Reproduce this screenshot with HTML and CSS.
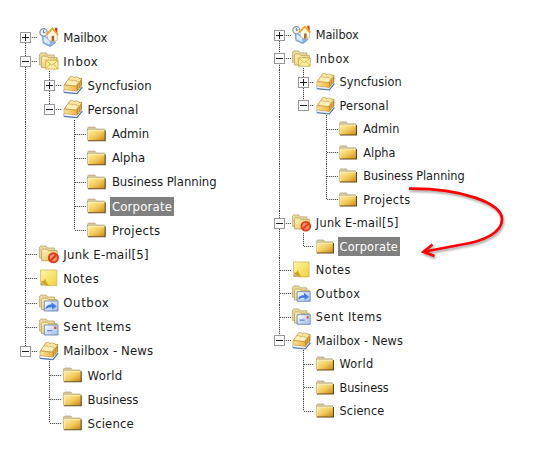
FILE: index.html
```
<!DOCTYPE html>
<html lang="en">
<head>
<meta charset="utf-8">
<title>Mail folders</title>
<link rel="stylesheet" href="styles.css">
</head>
<body>
<svg class="defs" aria-hidden="true">
  <defs>
    <linearGradient id="gold" x1="0" y1="0" x2="1" y2="1"><stop offset="0" stop-color="#fff0a8"/><stop offset=".5" stop-color="#f2cb5c"/><stop offset="1" stop-color="#c98412"/></linearGradient>
    <linearGradient id="pale" x1="0" y1="0" x2="1" y2="1"><stop offset="0" stop-color="#fff3bd"/><stop offset="1" stop-color="#e3bd5c"/></linearGradient>
    <linearGradient id="note" x1="0" y1="0" x2="1" y2="1"><stop offset="0" stop-color="#fff7a8"/><stop offset="1" stop-color="#efd03a"/></linearGradient>
    <linearGradient id="blue" x1="0" y1="0" x2="1" y2="1"><stop offset="0" stop-color="#fff"/><stop offset="1" stop-color="#9fbce8"/></linearGradient>
    <linearGradient id="wood" x1="0" y1="0" x2="1" y2="0"><stop offset="0" stop-color="#f9e3a0"/><stop offset="1" stop-color="#eeb53c"/></linearGradient>
    <symbol id="folder" viewBox="0 0 20 20">
      <path d="M.5 16V4.2L1.7 3h6.1l1.7 2h7.8v3H1z" fill="#d3c69b" stroke="#b5a57b" stroke-width=".7"/>
      <path d="M1 6.4h17v10.2H1z" fill="url(#gold)"/>
      <path d="M1.2 16V6.6H17.4" fill="none" stroke="#fff2b4" stroke-width=".8"/>
      <path d="M.8 16.7h17.4V6.2" fill="none" stroke="#66491c" stroke-width="1.1"/>
    </symbol>
    <symbol id="back" viewBox="0 0 20 20">
      <path d="M.6 14V3.1L1.8 2h5.3l1.5 2h6.8v10z" fill="#eadba0" stroke="#b5a571" stroke-width=".8"/>
      <path d="M2.6 16.7V6.1l1-1h4.2l1.3 1.5h9v10.1z" fill="url(#pale)" stroke="#ba9d54" stroke-width=".8"/>
    </symbol>
    <symbol id="inbox" viewBox="0 0 20 20">
      <use href="#back"/>
      <path d="M6.8 9.2h12.2v8.8h-12.2z" fill="#fff2a4" stroke="#c9a03a" stroke-width=".8"/>
      <path d="M7 9.6l5.9 4.7 5.9-4.7M7 17.6l4.1-4.6m7.7 4.6l-4.1-4.6" fill="none" stroke="#d3a62e" stroke-width=".8"/>
    </symbol>
    <symbol id="junk" viewBox="0 0 20 20">
      <use href="#back"/>
      <circle cx="14.4" cy="13.8" r="4.6" fill="#f69272" stroke="#dd3c16" stroke-width="1.9"/>
      <path d="M11.4 16.8l6-6" stroke="#dd3c16" stroke-width="2"/>
    </symbol>
    <symbol id="outbox" viewBox="0 0 20 20">
      <use href="#back"/>
      <path d="M5.3 8h13.7v10H5.3z" fill="url(#blue)" stroke="#6784bb" stroke-width=".9"/>
      <path d="M6.5 16.6c0-3.4 2.2-5 6-5V9.2l5.2 4-4.6 3.4v-2.2c-2.8-.2-4.8.4-6.6 2.2z" fill="#417be0"/>
    </symbol>
    <symbol id="sent" viewBox="0 0 20 20">
      <use href="#back"/>
      <path d="M5.3 8h13.7v10H5.3z" fill="url(#blue)" stroke="#6784bb" stroke-width=".9"/>
      <path d="M15.2 9.6h2.2V12h-2.2z" fill="#e0482c"/><path d="M8 13.7h5.3" stroke="#5b7fc2" stroke-width="1.1"/>
    </symbol>
    <symbol id="notes" viewBox="0 0 20 20">
      <path d="M1.6 2h16.2v15.6H6.3l-4.7-4.2z" fill="url(#note)" stroke="#cdb04b" stroke-width=".7"/>
      <path d="M1.6 13.2c2.2.4 4-.4 4.4-2.8.8 2.8 1.9 5.6 4.6 7.1H6.3z" fill="#d0a61f"/>
      <path d="M1.4 14v3.6H6z" fill="#b3a878"/>
    </symbol>
    <symbol id="stack" viewBox="0 0 20 20">
      <path d="M.6 15.2L4.6 11l14.6 1.2-5 6.2-13.3-1.2z" fill="#eef4fd" stroke="#7d98be" stroke-width=".7"/>
      <path d="M.9 17.4l13 1.3 5.2-6.3" fill="none" stroke="#5477a8" stroke-width="1.1"/>
      <path d="M1 9.8L6.6 2l12.4 1v7.2l-5 5.9-13-1.7z" fill="#d6a03a"/>
      <path d="M5.4 4.2l1.7-2.7 3.4.3.6 1.1 1.3-.9 3.1.3.6 1.1 2.7.2-3.3 4.7-11.4-1.2z" fill="#fae5a4" stroke="#b9974c" stroke-width=".6"/>
      <path d="M3.2 7.2l1.8-2.4 3.2.3.8 1.2 1.5-.9 3.2.4.7 1.2 1.5.1-3 3.9-11-1.2z" fill="#ffeeb8" stroke="#c09a47" stroke-width=".6"/>
      <path d="M1 10l12.8 1.3.2 4.8-13-1.6z" fill="url(#wood)" stroke="#c9973a" stroke-width=".6"/>
      <path d="M14 11.3l5-7v6l-4.8 5.7z" fill="#b98a33"/>
      <path d="M15.6 9.5v4.4m1.6-6.6v4.7" stroke="#e8c473" stroke-width=".7"/>
    </symbol>
    <symbol id="home" viewBox="0 0 20 20">
      <path d="M3.5 9l11 3.3 2 3.2-5.3 4L4 16z" fill="#85b5ef" stroke="#5583bd" stroke-width=".7"/>
      <path d="M4.6 9.2l6 4.1.2 4.4-6.2-2.8z" fill="#d9eafc"/>
      <circle cx="4.6" cy="5.4" r="3.7" fill="#eff4fa" stroke="#8495ad" stroke-width="1.2"/>
      <path d="M4.5 3.2v2.6l2-.8" fill="none" stroke="#54647c" stroke-width=".9"/>
      <path d="M16 .8h2.4v5H16z" fill="#d93a22"/>
      <path d="M8.6 7.2l4.9-5 4.8 5v6l-4.9 1.6-4.6-2.4z" fill="#fff8e6" stroke="#b3a27e" stroke-width=".6"/>
      <path d="M7.4 7.7l6-6.1 5.8 6.4" fill="none" stroke="#f4a51f" stroke-width="1.8"/>
      <path d="M12.6 8.8h2.6v5l-2.6.8z" fill="#a86824"/>
    </symbol>
  </defs>
</svg>
<main class="board">
  <div class="tree before">
    <div class="row"><i class="g top"><b class="plus"></b></i><svg class="icon"><use href="#home"/></svg><span class="t-mailbox">Mailbox</span></div>
    <div class="row"><i class="g tee"><b></b></i><svg class="icon"><use href="#inbox"/></svg><span class="t-inbox">Inbox</span></div>
    <div class="row"><i class="g bar"></i><i class="g tee first"><b class="plus"></b></i><svg class="icon"><use href="#stack"/></svg><span class="t-sync">Syncfusion</span></div>
    <div class="row"><i class="g bar"></i><i class="g end"><b></b></i><svg class="icon"><use href="#stack"/></svg><span class="t-personal">Personal</span></div>
    <div class="row"><i class="g bar"></i><i class="g"></i><i class="g tee first"></i><svg class="icon"><use href="#folder"/></svg><span class="t-admin">Admin</span></div>
    <div class="row"><i class="g bar"></i><i class="g"></i><i class="g tee"></i><svg class="icon"><use href="#folder"/></svg><span class="t-alpha">Alpha</span></div>
    <div class="row"><i class="g bar"></i><i class="g"></i><i class="g tee"></i><svg class="icon"><use href="#folder"/></svg><span class="t-planning">Business Planning</span></div>
    <div class="row"><i class="g bar"></i><i class="g"></i><i class="g tee"></i><svg class="icon"><use href="#folder"/></svg><span class="t-corporate selected">Corporate</span></div>
    <div class="row"><i class="g bar"></i><i class="g"></i><i class="g end"></i><svg class="icon"><use href="#folder"/></svg><span class="t-projects">Projects</span></div>
    <div class="row"><i class="g tee"></i><svg class="icon"><use href="#junk"/></svg><span class="t-junk">Junk E-mail[5]</span></div>
    <div class="row"><i class="g tee"></i><svg class="icon"><use href="#notes"/></svg><span class="t-notes">Notes</span></div>
    <div class="row"><i class="g tee"></i><svg class="icon"><use href="#outbox"/></svg><span class="t-outbox">Outbox</span></div>
    <div class="row"><i class="g tee"></i><svg class="icon"><use href="#sent"/></svg><span class="t-sent">Sent Items</span></div>
    <div class="row"><i class="g end"><b></b></i><svg class="icon"><use href="#stack"/></svg><span class="t-news">Mailbox - News</span></div>
    <div class="row"><i class="g"></i><i class="g tee first"></i><svg class="icon"><use href="#folder"/></svg><span class="t-world">World</span></div>
    <div class="row"><i class="g"></i><i class="g tee"></i><svg class="icon"><use href="#folder"/></svg><span class="t-business">Business</span></div>
    <div class="row"><i class="g"></i><i class="g end"></i><svg class="icon"><use href="#folder"/></svg><span class="t-science">Science</span></div>
  </div>
  <div class="tree after">
    <div class="row"><i class="g top"><b class="plus"></b></i><svg class="icon"><use href="#home"/></svg><span class="t-mailbox">Mailbox</span></div>
    <div class="row"><i class="g tee"><b></b></i><svg class="icon"><use href="#inbox"/></svg><span class="t-inbox">Inbox</span></div>
    <div class="row"><i class="g bar"></i><i class="g tee first"><b class="plus"></b></i><svg class="icon"><use href="#stack"/></svg><span class="t-sync">Syncfusion</span></div>
    <div class="row"><i class="g bar"></i><i class="g end"><b></b></i><svg class="icon"><use href="#stack"/></svg><span class="t-personal">Personal</span></div>
    <div class="row"><i class="g bar"></i><i class="g"></i><i class="g tee first"></i><svg class="icon"><use href="#folder"/></svg><span class="t-admin">Admin</span></div>
    <div class="row"><i class="g bar"></i><i class="g"></i><i class="g tee"></i><svg class="icon"><use href="#folder"/></svg><span class="t-alpha">Alpha</span></div>
    <div class="row"><i class="g bar"></i><i class="g"></i><i class="g tee"></i><svg class="icon"><use href="#folder"/></svg><span class="t-planning">Business Planning</span></div>
    <div class="row"><i class="g bar"></i><i class="g"></i><i class="g end"></i><svg class="icon"><use href="#folder"/></svg><span class="t-projects">Projects</span></div>
    <div class="row"><i class="g tee"><b></b></i><svg class="icon"><use href="#junk"/></svg><span class="t-junk">Junk E-mail[5]</span></div>
    <div class="row"><i class="g bar"></i><i class="g end first"></i><svg class="icon"><use href="#folder"/></svg><span class="t-corporate selected">Corporate</span></div>
    <div class="row"><i class="g tee"></i><svg class="icon"><use href="#notes"/></svg><span class="t-notes">Notes</span></div>
    <div class="row"><i class="g tee"></i><svg class="icon"><use href="#outbox"/></svg><span class="t-outbox">Outbox</span></div>
    <div class="row"><i class="g tee"></i><svg class="icon"><use href="#sent"/></svg><span class="t-sent">Sent Items</span></div>
    <div class="row"><i class="g end"><b></b></i><svg class="icon"><use href="#stack"/></svg><span class="t-news">Mailbox - News</span></div>
    <div class="row"><i class="g"></i><i class="g tee first"></i><svg class="icon"><use href="#folder"/></svg><span class="t-world">World</span></div>
    <div class="row"><i class="g"></i><i class="g tee"></i><svg class="icon"><use href="#folder"/></svg><span class="t-business">Business</span></div>
    <div class="row"><i class="g"></i><i class="g end"></i><svg class="icon"><use href="#folder"/></svg><span class="t-science">Science</span></div>
  </div>
  <svg class="arrow" viewBox="400 180 120 85">
    <path d="M409 188.6C461 188 502 203 502 219.5C502 232 485 241 462 244.5L425 251.5"/>
    <path d="M432.5 244.5L423.5 251.8L434.5 256"/>
  </svg>
</main>
</body>
</html>
```
FILE: styles.css
```
body {
  margin: 0;
  background: #fff;
  color: #1c1c1c;
  font-family: "DejaVu Sans Condensed", "DejaVu Sans", sans-serif;
  font-stretch: condensed;
  font-size: 13px;
}
.defs { position: absolute; width: 0; height: 0; }
.board {
  position: relative;
  width: 534px;
  height: 451px;
  box-sizing: border-box;
  padding-left: 13px;
  display: flex;
  align-items: flex-start;
  overflow: hidden;
}
.tree { flex: none; width: 254px; }
.before { --row: 24.15px; --cell: 24.3px; padding-top: 25px; }
.after { --row: 23.5px; --cell: 23.7px; padding-top: 23.2px; font-size: 12.6px; }
.row { display: flex; align-items: center; height: var(--row); }
.row span {
  margin-left: 2.7px;
  padding: 0 2px;
  line-height: 19px;
  white-space: nowrap;
}
.row .selected { background: #808080; color: #fff; }
.icon { flex: none; width: 20px; height: 20px; margin-left: 1.3px; }
.after .icon { width: 19.2px; height: 19.2px; }

/* label tracking */
.t-mailbox, .t-business { letter-spacing: -.12px; }
.t-planning { letter-spacing: -.06px; }
.t-sync { letter-spacing: .05px; }
.t-personal, .t-science, .t-news { letter-spacing: .13px; }
.t-corporate { letter-spacing: .2px; }
.t-junk { letter-spacing: .25px; }
.t-projects, .t-world { letter-spacing: .32px; }
.t-notes { letter-spacing: .45px; }
.t-sent { letter-spacing: .53px; }
.t-inbox, .t-outbox { letter-spacing: .62px; }

/* connector cells */
.g {
  position: relative;
  flex: none;
  width: var(--cell);
  height: 100%;
}
.bar::before, .tee::before, .end::before, .top::before {
  content: "";
  position: absolute;
  left: 12px;
  top: 0;
  bottom: 0;
  width: 1px;
  background: repeating-linear-gradient(#444 0 1px, #ddd 1px 2px);
}
.top::before { top: 50%; }
.end::before { bottom: 50%; }
.first::before { top: -2px; }
.tee::after, .end::after, .top::after {
  content: "";
  position: absolute;
  left: 13px;
  right: 0;
  top: 50%;
  height: 1px;
  background: repeating-linear-gradient(90deg, #555 0 1px, #ddd 1px 2px);
}
.g b {
  position: absolute;
  z-index: 1;
  left: 7px;
  top: calc(50% - 5px);
  width: 11px;
  height: 11px;
  box-sizing: border-box;
  border: 1px solid #999;
  background: linear-gradient(#222, #222) center / 7px 1px no-repeat #fff;
}
.g .plus {
  background: linear-gradient(#222, #222) center / 7px 1px no-repeat,
    linear-gradient(#222, #222) center / 1px 7px no-repeat #fff;
}
.arrow {
  position: absolute;
  left: 400px;
  top: 180px;
  width: 120px;
  height: 85px;
  fill: none;
  stroke: #f00;
  stroke-width: 2.7;
  filter: drop-shadow(1px 2px 1px rgba(0, 0, 0, .35));
}
```
